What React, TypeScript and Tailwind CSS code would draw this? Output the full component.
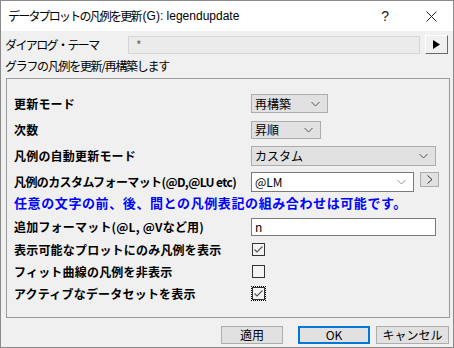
import React from 'react';

const FONT = { fontFamily: '"Noto Sans CJK JP", "Liberation Sans", sans-serif' };

function Chevron({ color = '#555' }: { color?: string }) {
  return (
    <svg width="9" height="6" viewBox="0 0 9 6" className="shrink-0">
      <path d="M0.5 1 L4.5 5 L8.5 1" fill="none" stroke={color} strokeWidth="1" />
    </svg>
  );
}

function Select({ value, width }: { value: string; width: number }) {
  return (
    <div
      className="flex h-full items-center justify-between border border-[#adadad] bg-[#e1e1e1] pl-[3px] pr-[7px] text-[12px] leading-none text-black"
      style={{ width }}
    >
      <span>{value}</span>
      <Chevron />
    </div>
  );
}

function Check({ checked, focus }: { checked: boolean; focus?: boolean }) {
  return (
    <div className={`flex h-[15px] w-[15px] items-center justify-center ${focus ? 'border border-dotted border-black' : ''}`}>
      <div className="flex h-[13px] w-[13px] items-center justify-center border border-[#333] bg-[#f4f4f4]">
        {checked && (
          <svg width="9" height="7" viewBox="0 0 9 7">
            <path d="M0.5 3.5 L3 6 L8.5 0.5" fill="none" stroke="#555" strokeWidth="1.1" />
          </svg>
        )}
      </div>
    </div>
  );
}

function Row({ label, mt, h, tight, children }: { label: string; mt: number; h: number; tight?: boolean; children?: React.ReactNode }) {
  return (
    <div className="flex items-center" style={{ marginTop: mt, height: h }}>
      <span
        className={`w-[237px] shrink-0 whitespace-nowrap text-[12px] font-bold leading-[14px] text-black ${tight ? 'tracking-[-0.6px]' : 'tracking-[0.2px]'}`}
      >
        {label}
      </span>
      <div className="flex h-full items-center">{children}</div>
    </div>
  );
}

export default function App() {
  return (
    <div className="flex h-[348px] w-[454px] flex-col overflow-hidden border border-[#8a8a8a] bg-[#f0f0f0]" style={FONT}>
      {/* title bar */}
      <div className="flex h-[30px] shrink-0 items-center bg-white pl-[7px] text-[12px] leading-none text-black">
        <span className="tracking-[-1.8px]">データプロットの凡例を更新</span>
        <span className="ml-[2px]" style={{ fontFamily: '"Liberation Sans", sans-serif' }}>(G): legendupdate</span>
        <span className="ml-auto mr-[37px] text-[14px] text-[#222]" style={{ fontFamily: '"Liberation Sans", sans-serif' }}>?</span>
        <svg width="11" height="11" viewBox="0 0 11 11" className="mr-[16px]">
          <path d="M0.5 0.5 L10.5 10.5 M10.5 0.5 L0.5 10.5" stroke="#222" strokeWidth="1" />
        </svg>
      </div>

      {/* theme row */}
      <div className="mt-[4px] flex h-[19px] items-center pl-[4px]">
        <span className="w-[123px] shrink-0 whitespace-nowrap text-[12px] leading-none tracking-[-1.6px] text-black">ダイアログ・テーマ</span>
        <div className="flex h-[18px] w-[292px] items-center border border-[#d6d6d6] bg-[#ebebeb] pl-[7px] text-[12px] leading-none text-[#666]">
          *
        </div>
        <div className="ml-[5px] flex h-[19px] w-[23px] items-center justify-center border-b border-r border-t border-l border-t-white border-l-white border-b-[#696969] border-r-[#696969] bg-[#f0f0f0]">
          <svg width="7" height="9" viewBox="0 0 7 9">
            <path d="M0 0 L7 4.5 L0 9 Z" fill="#000" />
          </svg>
        </div>
      </div>

      <div className="mt-[4px] flex h-[16px] items-center pl-[4px] text-[12px] leading-none tracking-[-1.3px] text-black">
        グラフの凡例を更新/再構築します
      </div>

      {/* group */}
      <div className="ml-[5px] mt-[4px] box-border h-[240px] w-[444px] border border-[#9a9a9a] pl-[7px]">
        <Row label="更新モード" mt={15} h={19}>
          <Select value="再構築" width={77} />
        </Row>
        <Row label="次数" mt={8} h={18}>
          <Select value="昇順" width={70} />
        </Row>
        <Row label="凡例の自動更新モード" mt={7} h={20}>
          <Select value="カスタム" width={185} />
        </Row>
        <Row label="凡例のカスタムフォーマット(@D,@LU etc)" mt={6} h={20} tight>
          <div className="flex h-full w-[163px] items-center justify-between border border-[#7a7a7a] bg-white pl-[3px] pr-[7px] text-[12px] leading-none text-black">
            <span>@LM</span>
            <Chevron color="#999" />
          </div>
          <div className="ml-[6px] flex h-[15px] w-[19px] items-center justify-center self-start border border-[#adadad] bg-[#e1e1e1]">
            <svg width="6" height="9" viewBox="0 0 6 9">
              <path d="M0.5 0.5 L5 4.5 L0.5 8.5" fill="none" stroke="#333" strokeWidth="1" />
            </svg>
          </div>
        </Row>
        <div className="mt-[1px] flex h-[18px] items-center whitespace-nowrap text-[13px] font-bold leading-none tracking-[0.6px] text-[#0000ff]">
          任意の文字の前、後、間との凡例表記の組み合わせは可能です。
        </div>
        <Row label="追加フォーマット(@L, @Vなど用)" mt={7} h={18}>
          <div className="flex h-full w-[185px] items-center border border-[#7a7a7a] bg-white pl-[3px] text-[12px] leading-none text-black">
            n
          </div>
        </Row>
        <Row label="表示可能なプロットにのみ凡例を表示" mt={7} h={13}>
          <Check checked />
        </Row>
        <Row label="フィット曲線の凡例を非表示" mt={9} h={13}>
          <Check checked={false} />
        </Row>
        <Row label="アクティブなデータセットを表示" mt={9} h={13}>
          <Check checked focus />
        </Row>
      </div>

      {/* buttons */}
      <div className="mt-[8px] flex h-[18px] items-center pl-[220px] text-[12px] leading-none text-black">
        <div className="flex h-[18px] w-[62px] items-center justify-center border border-[#adadad] bg-[#e1e1e1]">適用</div>
        <div className="ml-[15px] flex h-[18px] w-[72px] items-center justify-center border-2 border-[#0078d7] bg-[#e1e1e1]">OK</div>
        <div className="ml-[6px] flex h-[18px] w-[73px] items-center justify-center border border-[#adadad] bg-[#e1e1e1]">キャンセル</div>
      </div>
    </div>
  );
}
